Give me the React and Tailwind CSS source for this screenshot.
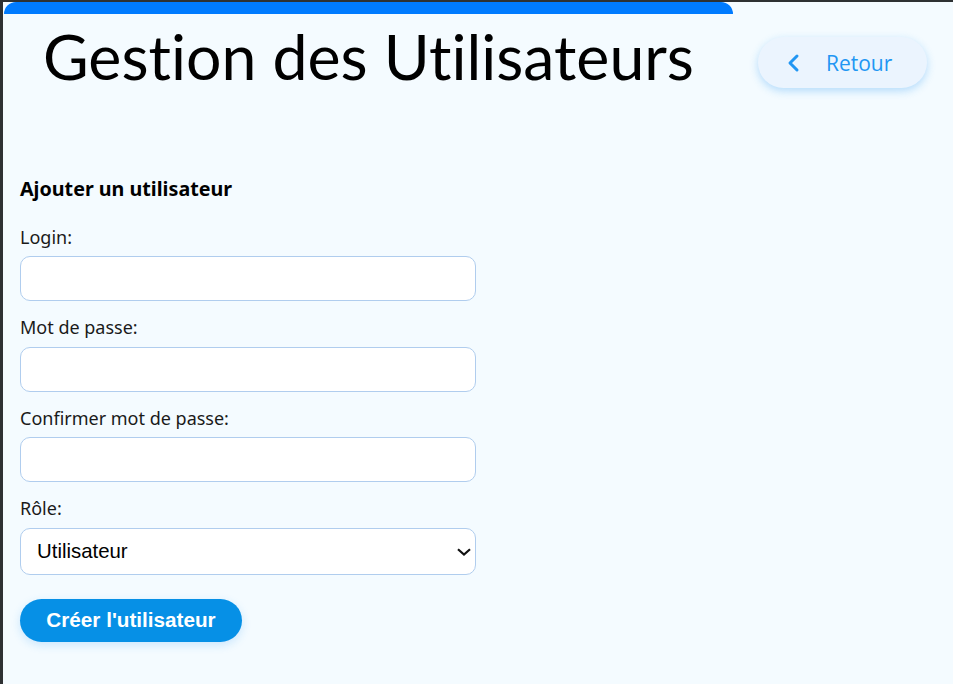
import React from "react";

const labelCls = "block text-[18px] leading-[25px] text-[#1a1a1a] mb-[6.5px]";
const inputCls = "block w-[456px] h-[45px] rounded-[10px] border border-[#b0cdee] bg-white";

function Field({ label }) {
  return (
    <div className="mb-[14px]">
      <label className={labelCls}>{label}</label>
      <input type="text" className={inputCls} />
    </div>
  );
}

export default function App() {
  return (
    <div className="h-screen overflow-hidden bg-[#2e3133] pt-[2px] pl-[3px] font-['Noto_Sans','Open_Sans',sans-serif]">
      <div className="h-full bg-[#f4fbff] pl-px">
        <div className="h-3 w-[729px] rounded-t-[14px] bg-[#007bff]" />
        <div className="flex items-start justify-between pl-[39px] pr-[26px]">
          <h1 className="font-['Lato',sans-serif] text-[62.6px] leading-[84px] text-black [font-variant-ligatures:none]">Gestion des Utilisateurs</h1>
          <button className="mt-[23px] flex h-[51px] w-[169px] items-center rounded-full bg-[#ebf4fe] pl-7 text-[21px] font-medium text-[#2196f3] shadow-[0_3px_8px_rgba(33,150,243,0.3)]">
            <svg width="16" height="20" viewBox="0 0 16 20" fill="none" stroke="currentColor" strokeWidth="3" strokeLinecap="round" strokeLinejoin="round">
              <path d="M11 3 L4 10 L11 17" />
            </svg>
            <span className="ml-6 pt-0.5 font-['Open_Sans',sans-serif]">Retour</span>
          </button>
        </div>
        <div className="pl-4 pt-[78px]">
          <h3 className="mb-[22.5px] text-[19.7px] font-bold leading-[26px] text-black">Ajouter un utilisateur</h3>
          <div>
            <Field label="Login:" />
            <Field label="Mot de passe:" />
            <Field label="Confirmer mot de passe:" />
          </div>
          <div className="mb-6">
            <label className={labelCls}>Rôle:</label>
            <div className="relative w-[456px]">
              <select className="block h-[47px] w-full appearance-none rounded-[10px] border border-[#b0cdee] bg-white pl-4 font-['Liberation_Sans',sans-serif] text-[20.4px] text-black">
                <option>Utilisateur</option>
              </select>
              <svg className="pointer-events-none absolute right-[5px] top-[20px]" width="14" height="8" viewBox="0 0 14 8" fill="none" stroke="#111" strokeWidth="2.2">
                <path d="M1 1.2 L7 6.5 L13 1.2" />
              </svg>
            </div>
          </div>
          <button className="h-[43px] w-[222px] rounded-full bg-[#0690e6] font-['Liberation_Sans',sans-serif] text-[20.7px] font-bold text-white shadow-[0_3px_10px_rgba(33,150,243,0.2)]">
            Créer l'utilisateur
          </button>
        </div>
      </div>
    </div>
  );
}
